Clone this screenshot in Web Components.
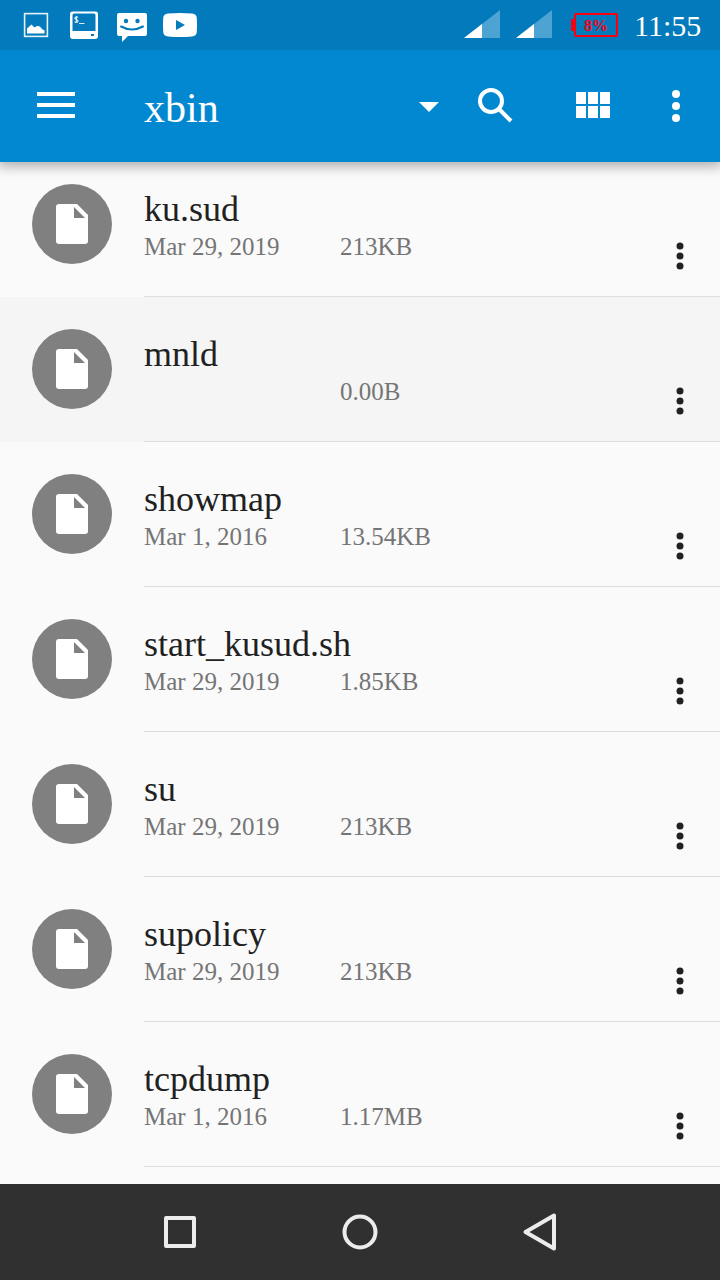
<!DOCTYPE html>
<html lang="en">
<head>
<meta charset="utf-8">
<meta name="viewport" content="width=device-width, initial-scale=1">
<title>xbin</title>
<style>
  body { margin: 0; background: #fafafa; color: #212121; font-family: "Liberation Serif", "Times New Roman", serif; }
</style>
</head>
<body>
<file-app></file-app>

<template id="app-tpl">
  <style>
    :host { display: flex; flex-direction: column; height: 100vh; overflow: hidden; }
    file-list { flex: 1; min-height: 0; }
  </style>
  <status-bar level="8%">11:55</status-bar>
  <tool-bar></tool-bar>
  <file-list>
    <file-row size="213KB" date="Mar 29, 2019">ku.sud</file-row>
    <file-row size="0.00B" pressed>mnld</file-row>
    <file-row size="13.54KB" date="Mar 1, 2016">showmap</file-row>
    <file-row size="1.85KB" date="Mar 29, 2019">start_kusud.sh</file-row>
    <file-row size="213KB" date="Mar 29, 2019">su</file-row>
    <file-row size="213KB" date="Mar 29, 2019">supolicy</file-row>
    <file-row size="1.17MB" date="Mar 1, 2016">tcpdump</file-row>
  </file-list>
  <nav-bar></nav-bar>
</template>

<template id="status-tpl">
  <style>
    :host { display: flex; align-items: center; justify-content: space-between; height: 50px; padding: 0 16px 0 12px; background: #027abb; color: #fff; flex: none; position: relative; z-index: 2; }
    svg { display: block; }
    .notes, .system { display: flex; align-items: center; }
    .system { gap: 16px; }
    .level { font-size: 16px; font-weight: bold; fill: #f8000f; }
    .clock { font-size: 30px; line-height: 32px; min-width: 70px; padding-top: 2px; }
  </style>
  <div class="notes">
    <svg width="48" height="50" viewBox="0 0 48 50" aria-hidden="true">
      <rect x="12.6" y="13.6" width="22.8" height="22.8" fill="none" stroke="#e6f2f8" stroke-width="1.6"/>
      <path d="M15 33.500v-5l4.500-4 3 3 2.500-1.500 3 .5 2 2.500 2.500 1.500v3z" fill="#fff"/>
    </svg>
    <svg width="48" height="50" viewBox="0 0 48 50" aria-hidden="true">
      <path fill="#fff" fill-rule="evenodd" d="M12.500 11.500h23q2.500 0 2.500 2.500v22q0 3-3 3H13q-3 0-3-3V14q0-2.500 2.500-2.500zM14 13.500q-1.500 0-1.500 1.500v16h23V15q0-1.500-1.500-1.500zM31 34v2h3v-2z"/>
      <path d="M18 17.500c-1-1-3.200-.6-3.200.8s3.200 1.300 3.200 2.800-2.200 1.600-3.400.6M16.400 16v6.800M19 23.500h5.500" fill="none" stroke="#d9ebf5" stroke-width="1.200"/>
    </svg>
    <svg width="48" height="50" viewBox="0 0 48 50" aria-hidden="true">
      <path d="M11 13h26q2 0 2 2v19q0 2-2 2H20l-6 6v-6h-3q-2 0-2-2V15q0-2 2-2z" fill="#fff"/>
      <circle cx="18" cy="21" r="2.200" fill="#027abb"/><circle cx="29.500" cy="21" r="2.200" fill="#027abb"/>
      <path d="M13 26.500q11 6 22 0" fill="none" stroke="#027abb" stroke-width="2" stroke-linecap="round"/>
    </svg>
    <svg width="48" height="50" viewBox="0 0 48 50" aria-hidden="true">
      <path d="M12 13.500q12-1 24 0 4.500.3 4.800 4.500.5 7 0 14-.3 4.200-4.800 4.500-12 1-24 0-4.500-.3-4.800-4.500-.5-7 0-14 .3-4.200 4.800-4.500z" fill="#fff"/>
      <path d="M20 20v10l9-5z" fill="#027abb"/>
    </svg>
  </div>
  <div class="system">
    <svg width="36" height="50" viewBox="0 0 36 50" aria-hidden="true"><path d="M36 10v28H0z" fill="#4da3d1"/><path d="M18 24v14H0z" fill="#fff"/></svg>
    <svg width="36" height="50" viewBox="0 0 36 50" aria-hidden="true"><path d="M36 10v28H0z" fill="#4da3d1"/><path d="M18 24v14H0z" fill="#fff"/></svg>
    <svg width="50" height="50" viewBox="0 0 50 50">
      <rect x="7" y="14" width="42" height="22" rx="1" fill="none" stroke="#f8000f" stroke-width="2"/>
      <rect x="3" y="19" width="4" height="12" rx="1" fill="#f8000f"/>
      <text class="level" x="28" y="31" text-anchor="middle"></text>
    </svg>
    <div class="clock"><slot></slot></div>
  </div>
</template>

<template id="tool-tpl">
  <style>
    :host { display: flex; align-items: stretch; height: 112px; background: #0288d1; box-shadow: 0 2px 12px 2px rgba(0,0,0,.33); color: #fff; flex: none; padding-right: 8px; box-sizing: border-box; position: relative; z-index: 1; }
    button { border: 0; padding: 0; background: none; color: inherit; display: flex; align-items: center; justify-content: center; width: 96px; }
    .menu { width: 112px; margin-right: 32px; }
    .more { width: 72px; }
    svg { display: block; fill: currentColor; }
    .folder { flex: 1; min-width: 0; display: grid; align-items: center; }
    .folder > * { grid-area: 1 / 1; }
    select { appearance: none; border: 0; margin: 0; padding: 4px 0 0; background: none; color: inherit; font: 42px/48px "Liberation Serif", serif; width: 100%; height: 52px; }
    .folder svg { justify-self: end; margin-right: 9px; pointer-events: none; }
  </style>
  <button class="menu" aria-label="Open menu"><svg width="38" height="112"><path d="M0 42h38v4H0zM0 53h38v4H0zM0 64h38v4H0z"/></svg></button>
  <div class="folder">
    <select aria-label="Folder"><option>xbin</option></select>
    <svg width="20" height="112"><path d="M0 52h20L10 62z"/></svg>
  </div>
  <button aria-label="Search"><svg width="36" height="112" viewBox="0 0 36 112"><circle cx="13" cy="51" r="11" fill="none" stroke="#fff" stroke-width="4"/><path d="M21.500 59.500L33 71" fill="none" stroke="#fff" stroke-width="4"/></svg></button>
  <button aria-label="Grid view"><svg width="36" height="112"><path d="M2 42h10v12H2zM14 42h10v12H14zM26 42h10v12H26zM2 56h10v12H2zM14 56h10v12H14zM26 56h10v12H26z"/></svg></button>
  <button class="more" aria-label="More options"><svg width="8" height="112"><circle cx="4" cy="44" r="4"/><circle cx="4" cy="56" r="4"/><circle cx="4" cy="68" r="4"/></svg></button>
</template>

<template id="list-tpl">
  <style>
    :host { display: block; overflow: hidden; background: #fafafa; }
    /* The list is scrolled a little way under the toolbar. */
    .scroll { margin-top: -10px; }
  </style>
  <div class="scroll" role="list"><slot></slot></div>
</template>

<template id="row-tpl">
  <style>
    :host { display: flex; height: 145px; background: #fafafa; }
    :host([pressed]) { background: #f5f5f5; }
    .icon { flex: none; width: 80px; height: 80px; margin: 32px; }
    .body { flex: 1; min-width: 0; display: flex; border-bottom: 1px solid #dedede; }
    .text { flex: 1; min-width: 0; padding-top: 37px; display: flex; flex-direction: column; gap: 2px; }
    .name { font-size: 36px; line-height: 40px; white-space: nowrap; }
    .meta { display: flex; font-size: 25px; line-height: 32px; color: #757575; white-space: nowrap; }
    .date { flex: none; width: 196px; }
    button { align-self: flex-end; flex: none; width: 80px; height: 80px; border: 0; padding: 0; background: none; display: flex; align-items: center; justify-content: center; }
    svg { display: block; }
  </style>
  <svg class="icon" viewBox="0 0 80 80" aria-hidden="true">
    <circle cx="40" cy="40" r="40" fill="#808080"/>
    <path d="M27 20h18l11 11v26q0 3-3 3H27q-3 0-3-3V23q0-3 3-3z" fill="#fff"/>
    <path d="M42 23v11h11z" fill="#808080"/>
  </svg>
  <div class="body">
    <div class="text">
      <div class="name"><slot></slot></div>
      <div class="meta"><span class="date"></span><span class="size"></span></div>
    </div>
    <button aria-label="File options"><svg width="8" height="28" fill="#212121"><circle cx="4" cy="4" r="3.500"/><circle cx="4" cy="14" r="3.500"/><circle cx="4" cy="24" r="3.500"/></svg></button>
  </div>
</template>

<template id="nav-tpl">
  <style>
    :host { display: flex; justify-content: center; height: 96px; background: #303030; flex: none; position: relative; z-index: 1; }
    button { width: 25%; border: 0; padding: 0; background: none; display: flex; align-items: center; justify-content: center; }
    svg { display: block; fill: none; stroke: #ececec; stroke-width: 4; stroke-linejoin: round; }
  </style>
  <button aria-label="Recent apps"><svg width="40" height="40"><rect x="6" y="6" width="28" height="28"/></svg></button>
  <button aria-label="Home"><svg width="40" height="40"><circle cx="20" cy="20" r="15.500"/></svg></button>
  <button aria-label="Back"><svg width="40" height="40"><path d="M34 3.500v33L5.500 20z"/></svg></button>
</template>

<script>
  class Base extends HTMLElement {
    constructor() {
      super();
      const root = this.attachShadow({ mode: 'open' });
      root.append(document.getElementById(this.constructor.template).content.cloneNode(true));
    }
    fill(selector, attribute) {
      this.shadowRoot.querySelector(selector).textContent = this.getAttribute(attribute) || '';
    }
  }
  class StatusBar extends Base {
    static template = 'status-tpl';
    connectedCallback() { this.fill('.level', 'level'); }
  }
  class ToolBar extends Base { static template = 'tool-tpl'; }
  class FileList extends Base { static template = 'list-tpl'; }
  class FileRow extends Base {
    static template = 'row-tpl';
    connectedCallback() {
      this.setAttribute('role', 'listitem');
      this.fill('.date', 'date');
      this.fill('.size', 'size');
    }
  }
  class NavBar extends Base { static template = 'nav-tpl'; }
  class FileApp extends Base { static template = 'app-tpl'; }
  customElements.define('status-bar', StatusBar);
  customElements.define('tool-bar', ToolBar);
  customElements.define('file-list', FileList);
  customElements.define('file-row', FileRow);
  customElements.define('nav-bar', NavBar);
  customElements.define('file-app', FileApp);
</script>
</body>
</html>
